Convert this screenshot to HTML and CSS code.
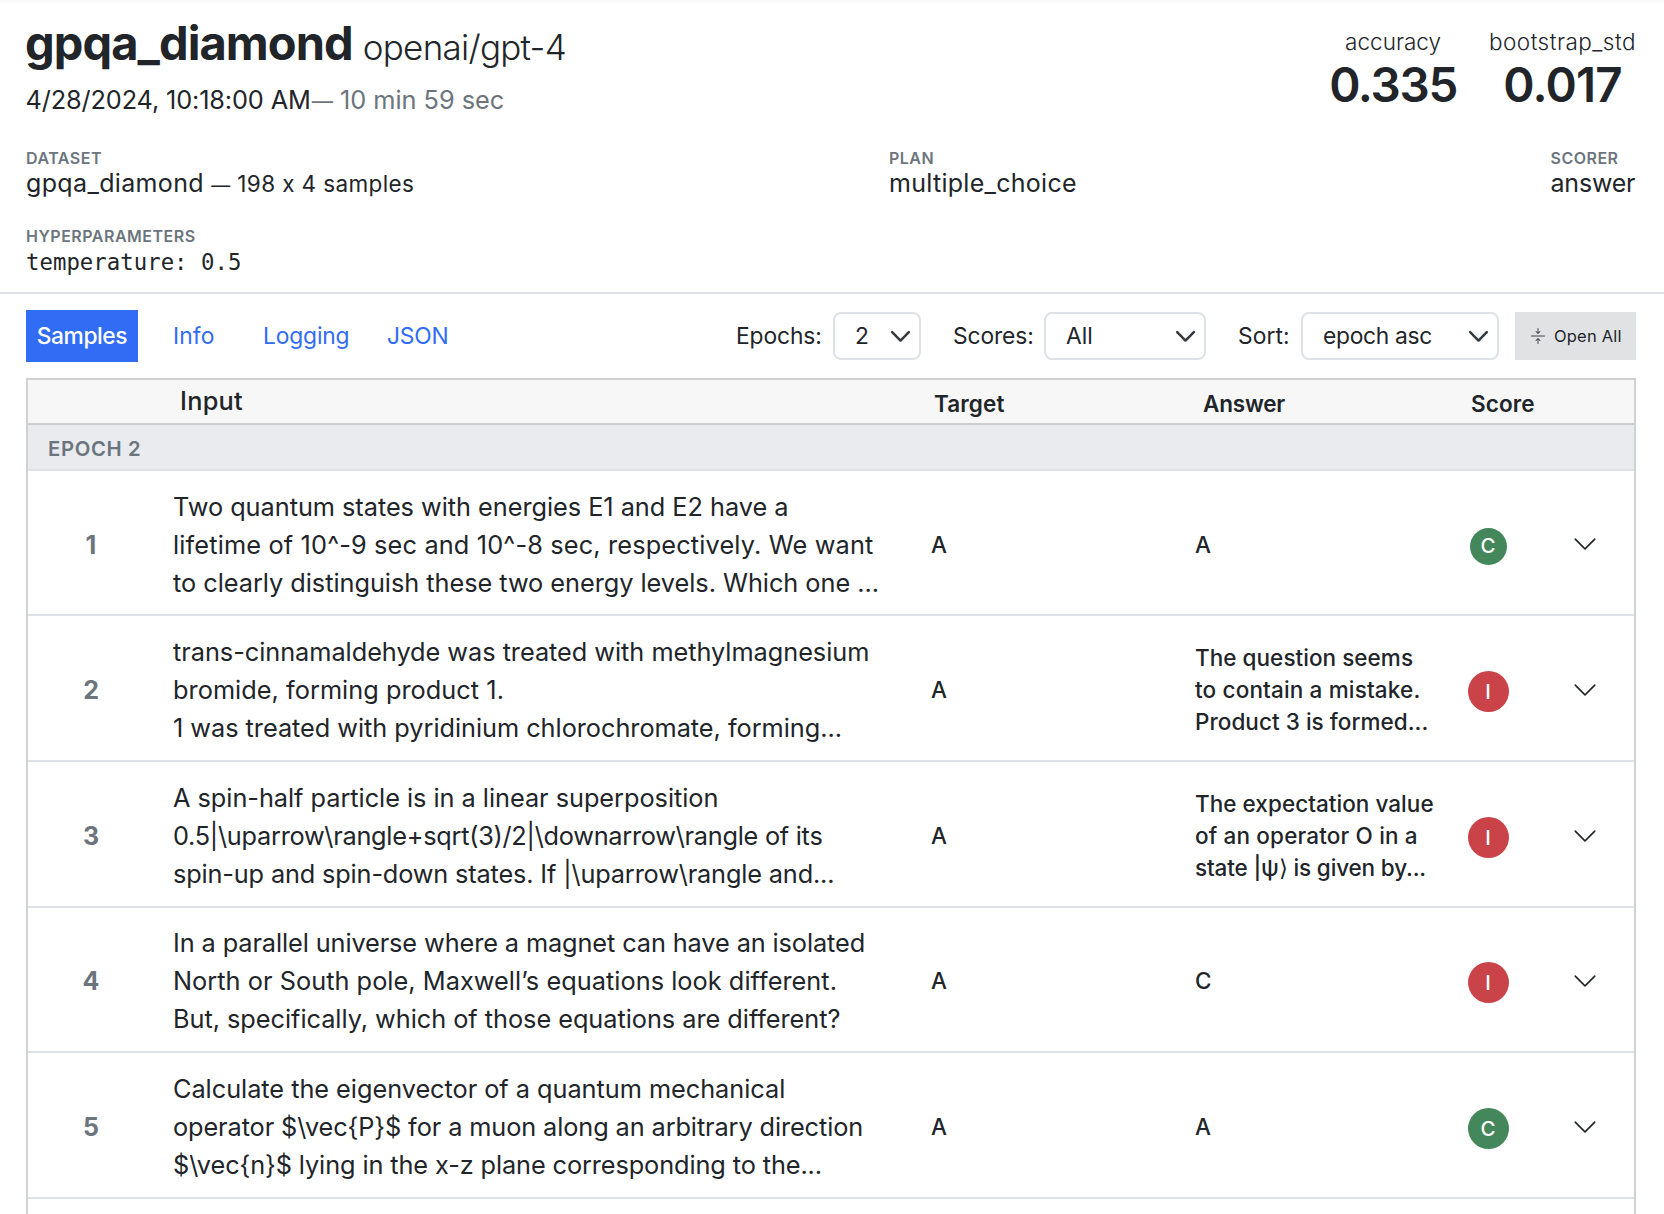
FILE: index.html
```html
<!DOCTYPE html>
<html lang="en">
<head>
<meta charset="utf-8">
<title>gpqa_diamond</title>
<link rel="stylesheet" href="styles.css">
</head>
<body>
<svg class="defs" aria-hidden="true">
  <symbol id="select-arrow" viewBox="0 0 16 16"><path fill="none" stroke="#343a40" stroke-width="1.75" stroke-linecap="round" stroke-linejoin="round" d="m2.2 5 5.8 5.8 5.8-5.8"/></symbol>
  <symbol id="chevron" viewBox="0 0 16 16"><path fill="currentColor" fill-rule="evenodd" d="M1.646 4.646a.5.5 0 0 1 .708 0L8 10.293l5.646-5.647a.5.5 0 0 1 .708.708l-6 6a.5.5 0 0 1-.708 0l-6-6a.5.5 0 0 1 0-.708z"/></symbol>
  <symbol id="collapse" viewBox="0 0 16 16"><path fill="currentColor" d="M1 8a.5.5 0 0 1 .5-.5h13a.5.5 0 0 1 0 1h-13A.5.5 0 0 1 1 8Zm7-8a.5.5 0 0 1 .5.5v3.793l1.146-1.147a.5.5 0 0 1 .708.708l-2 2a.5.5 0 0 1-.708 0l-2-2a.5.5 0 1 1 .708-.708L7.5 4.293V.5A.5.5 0 0 1 8 0Zm-.5 11.707-1.146 1.147a.5.5 0 0 1-.708-.708l2-2a.5.5 0 0 1 .708 0l2 2a.5.5 0 0 1-.708.708L8.5 11.707V15.5a.5.5 0 0 1-1 0v-3.793Z"/></symbol>
</svg>
<header class="header">
  <div class="summary">
    <div>
      <div class="title"><h1>gpqa_diamond</h1><span class="model">openai/gpt-4</span></div>
      <div class="date">4/28/2024, 10:18:00 AM<span class="duration"><span class="dash">—</span> 10 min 59 sec</span></div>
    </div>
    <div class="metrics">
      <div class="metric"><div class="metric-name">accuracy</div><div class="metric-value">0.335</div></div>
      <div class="metric"><div class="metric-name wide">bootstrap_std</div><div class="metric-value loose">0.017</div></div>
    </div>
  </div>
  <div class="details">
    <div><div class="label">DATASET</div><div class="value">gpqa_diamond <span class="samples"><span class="dash">—</span> 198 x 4 samples</span></div></div>
    <div><div class="label">PLAN</div><div class="value choice">multiple_choice</div></div>
    <div><div class="label">SCORER</div><div class="value tight">answer</div></div>
    <div class="hyper"><div class="label">HYPERPARAMETERS</div><div class="value mono">temperature: 0.5</div></div>
  </div>
</header>
<div class="toolbar">
  <nav class="tabs">
    <a class="tab active">Samples</a><a class="tab info">Info</a><a class="tab logging">Logging</a><a class="tab json">JSON</a>
  </nav>
  <div class="filters">
    <span class="filter-label epochs-label">Epochs:</span>
    <div class="select epochs"><span>2</span><svg><use href="#select-arrow"/></svg></div>
    <span class="filter-label">Scores:</span>
    <div class="select scores"><span>All</span><svg><use href="#select-arrow"/></svg></div>
    <span class="filter-label sort-label">Sort:</span>
    <div class="select sort"><span>epoch asc</span><svg><use href="#select-arrow"/></svg></div>
    <button class="open-all"><svg><use href="#collapse"/></svg>Open All</button>
  </div>
</div>
<main class="samples-list">
  <div class="grid head"><span></span><span class="head-input">Input</span><span class="head-cell">Target</span><span class="head-cell answer-head">Answer</span><span class="head-cell score-head">Score</span></div>
  <div class="epoch">EPOCH 2</div>
  <div class="grid row first">
    <div class="num">1</div>
    <div class="input"><p>Two quantum states with energies E1 and E2 have a</p><p class="loose-line">lifetime of 10^-9 sec and 10^-8 sec, respectively. We want</p><p>to clearly distinguish these two energy levels. Which one ...</p></div>
    <div class="small">A</div><div class="small">A</div>
    <div class="score"><span class="badge correct compact">C</span></div>
    <svg class="chevron"><use href="#chevron"/></svg>
  </div>
  <div class="grid row">
    <div class="num">2</div>
    <div class="input"><p>trans-cinnamaldehyde was treated with methylmagnesium</p><p class="even-line">bromide, forming product 1.</p><p>1 was treated with pyridinium chlorochromate, forming...</p></div>
    <div class="small">A</div><div class="small"><p>The question seems</p><p class="loose-line">to contain a mistake.</p><p>Product 3 is formed...</p></div>
    <div class="score"><span class="badge incorrect">I</span></div>
    <svg class="chevron"><use href="#chevron"/></svg>
  </div>
  <div class="grid row">
    <div class="num">3</div>
    <div class="input"><p>A spin-half particle is in a linear superposition</p><p class="tightest-line">0.5|\uparrow\rangle+sqrt(3)/2|\downarrow\rangle of its</p><p class="tighter-line">spin-up and spin-down states. If |\uparrow\rangle and...</p></div>
    <div class="small">A</div><div class="small"><p>The expectation value</p><p class="loose-line">of an operator O in a</p><p class="tighter-line">state |ψ<span class="ket">⟩</span> is given by...</p></div>
    <div class="score"><span class="badge incorrect">I</span></div>
    <svg class="chevron"><use href="#chevron"/></svg>
  </div>
  <div class="grid row short">
    <div class="num">4</div>
    <div class="input"><p class="tight-line">In a parallel universe where a magnet can have an isolated</p><p class="even-line">North or South pole, Maxwell’s equations look different.</p><p>But, specifically, which of those equations are different?</p></div>
    <div class="small">A</div><div class="small">C</div>
    <div class="score"><span class="badge incorrect">I</span></div>
    <svg class="chevron"><use href="#chevron"/></svg>
  </div>
  <div class="grid row">
    <div class="num">5</div>
    <div class="input"><p>Calculate the eigenvector of a quantum mechanical</p><p class="tight-line">operator $\vec{P}$ for a muon along an arbitrary direction</p><p class="tight-line">$\vec{n}$ lying in the x-z plane corresponding to the...</p></div>
    <div class="small">A</div><div class="small">A</div>
    <div class="score"><span class="badge correct">C</span></div>
    <svg class="chevron"><use href="#chevron"/></svg>
  </div>
</main>
</body>
</html>
```
FILE: styles.css
```css
* { box-sizing: border-box; }
body {
  margin: 0;
  height: 1214px;
  overflow: hidden;
  display: flex;
  flex-direction: column;
  background: linear-gradient(#f7f7f7, #fff 5px);
  color: #212529;
  font-family: Inter, "DejaVu Sans", sans-serif;
  white-space: nowrap;
}
p, h1 { margin: 0; }
.defs { display: none; }
svg { display: block; flex: none; }

.header { flex: none; height: 294px; padding: 15px 28px 0 25px; border-bottom: 2px solid #dee2e6; }
.summary { display: flex; justify-content: space-between; height: 132.5px; }
.title { display: flex; align-items: baseline; gap: 10px; height: 56px; line-height: 56px; }
.title h1 { font-size: 47px; font-weight: 700; letter-spacing: -.93px; }
.model { font-size: 35px; font-weight: 300; letter-spacing: -.73px; }
.date { margin-top: 10px; padding-left: .5px; font-size: 25.3px; font-weight: 400; line-height: 38px; letter-spacing: -.13px; }
.duration { margin-left: 1px; color: #6c757d; letter-spacing: -.02px; }
.dash { font-size: .84em; }
.metrics { display: flex; gap: 32px; padding-top: 12px; }
.metric { text-align: center; }
.metric-name { font-size: 22.5px; font-weight: 300; line-height: 30px; }
.metric-name.wide { letter-spacing: .48px; }
.metric-value { margin-top: 3px; font-size: 47.5px; font-weight: 600; line-height: 50px; letter-spacing: -1.3px; }
.metric-value.loose { letter-spacing: -.8px; }

.details { display: grid; grid-template-columns: 863px 661.5px auto; row-gap: 28px; padding-left: 1px; }
.label { font-size: 16px; font-weight: 600; line-height: 20px; letter-spacing: .5px; color: #6c757d; }
.value { height: 30px; font-size: 25px; line-height: 30px; letter-spacing: .35px; }
.value.choice { letter-spacing: .28px; }
.value.tight { letter-spacing: -.2px; }
.samples { font-size: 22.5px; letter-spacing: .38px; }
.mono { margin-top: 1px; font-family: "DejaVu Sans Mono", monospace; font-size: 22.3px; letter-spacing: .04px; }

.toolbar { flex: none; display: flex; justify-content: space-between; height: 84px; padding: 16px 28px 16px 26px; font-size: 22.8px; }
.tabs { display: flex; }
.tab { line-height: 52px; color: #316cf4; }
.tab.active { width: 112px; background: #316cf4; color: #fff; font-weight: 500; letter-spacing: -.44px; text-align: center; }
.tab.info { width: 90px; margin-left: 35px; letter-spacing: .1px; }
.tab.logging { width: 124px; letter-spacing: -.15px; }
.tab.json { letter-spacing: -.19px; }
.filters { display: flex; align-items: center; }
.filter-label { width: 91px; padding-bottom: 1px; letter-spacing: -.1px; }
.epochs-label { width: 97px; }
.sort-label { width: 63px; letter-spacing: .1px; }
.select { display: flex; align-items: center; justify-content: space-between; height: 48px; border: 2px solid #dee2e6; border-radius: 8px; background: #fff; padding: 0 7px 0 20px; }
.select span { padding-bottom: 1px; }
.select svg { width: 23px; height: 23px; }
.epochs { width: 88px; margin-right: 32px; }
.scores { width: 162px; margin-right: 32px; }
.sort { width: 198px; margin-right: 16px; letter-spacing: -.3px; }
.open-all { display: flex; align-items: center; gap: 8px; width: 121px; height: 48px; margin: 0; padding: 0 0 0 15px; border: 0; background: #e1e2e4; color: #212529; font: 400 16.5px Inter, sans-serif; letter-spacing: .2px; }
.open-all svg { width: 16px; height: 16px; color: #41464b; }

.samples-list { flex: none; height: 850px; margin: 0 28px 0 26px; border: 2px solid #d0d1d2; background: #fff; }
.grid { display: grid; grid-template-columns: 145px 758px 264px 260px 122px auto; align-items: center; }
.head { height: 45px; border-bottom: 2px solid #cdcecf; background: #f7f7f7; }
.head-input { padding: 0 0 2px 7px; font-size: 25.3px; font-weight: 500; letter-spacing: .26px; }
.head-cell { padding: 4px 0 0 3px; font-size: 22.5px; font-weight: 600; letter-spacing: .1px; }
.score-head { padding-left: 16px; }
.answer-head { padding-left: 8px; letter-spacing: -.2px; }
.epoch { height: 46px; padding: 2px 0 0 20px; border-bottom: 2px solid #dee2e6; background: #e9ebef; color: #6c757d; font-size: 20.3px; font-weight: 600; line-height: 44px; letter-spacing: .65px; }
.row { height: 146px; padding-top: 3px; border-bottom: 2px solid #dee2e6; }
.row.first, .row.short { height: 145px; }
.row.short { padding-top: 2px; }
.num { padding: 1px 20px 0 1px; text-align: center; font-size: 25px; font-weight: 700; color: #6c757d; }
.input { padding-top: 1px; font-size: 25.3px; line-height: 38px; letter-spacing: -.03px; }
.loose-line { letter-spacing: .156px; }
.even-line { letter-spacing: .04px; }
.tight-line { letter-spacing: -.1px; }
.tighter-line { letter-spacing: -.15px; }
.tightest-line { letter-spacing: -.26px; }
.small { padding-top: 1px; font-size: 22.5px; font-weight: 530; line-height: 32px; letter-spacing: .04px; }
.ket { font-weight: 300; font-family: "DejaVu Sans", sans-serif; line-height: 1; }
.score { display: flex; justify-content: center; width: 66px; padding-top: 3px; }
.badge { width: 41px; height: 41px; border-radius: 50%; color: #fff; font-size: 20.5px; font-weight: 530; line-height: 41px; text-align: center; }
.compact { width: 37px; height: 37px; margin-top: 1px; line-height: 36px; }
.correct { background: #43875a; }
.incorrect { background: #ca4349; }
.chevron { width: 26px; height: 26px; margin-left: -5px; }
```
